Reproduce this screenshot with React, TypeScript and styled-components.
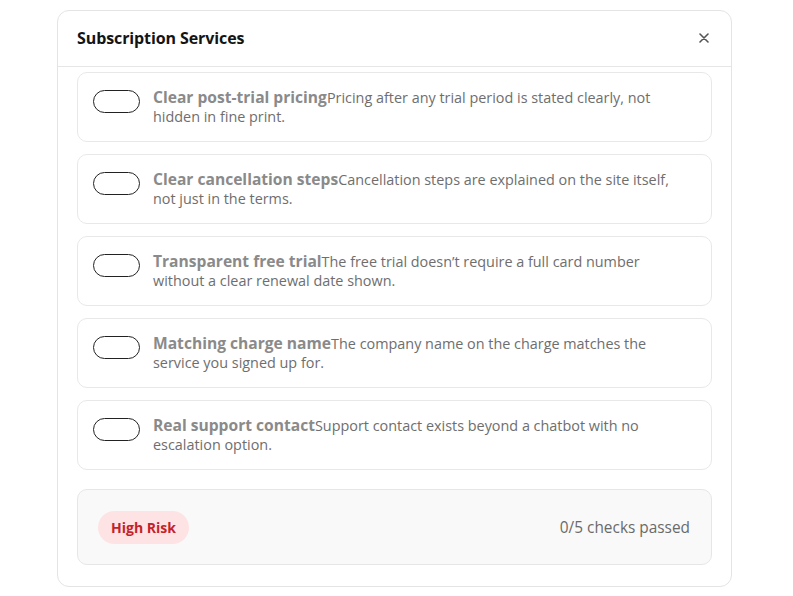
import { FC } from "react";
import styled, { createGlobalStyle } from "styled-components";

const GlobalStyle = createGlobalStyle`
  html, body {
    margin: 0;
    padding: 0;
    background: #ffffff;
    font-family: "Open Sans", "Noto Sans", sans-serif;
  }
`;

const Page = styled.div`
  width: 793px;
  height: 596px;
  overflow: hidden;
  padding: 10px 0 0 57px;
  box-sizing: border-box;
  display: flex;
`;

const Modal = styled.div`
  width: 675px;
  height: 577px;
  border: 1px solid #e4e4e4;
  border-radius: 12px;
  background: #fff;
  display: flex;
  flex-direction: column;
  box-sizing: border-box;
  overflow: hidden;
`;

const Header = styled.header`
  height: 54px;
  flex-shrink: 0;
  display: flex;
  align-items: center;
  justify-content: space-between;
  padding: 0 20px 1px 19px;
  border-bottom: 1px solid #e6e6e6;

  h2 {
    margin: 0;
    font-size: 16px;
    font-weight: 700;
    color: #141414;
    letter-spacing: -0.1px;
  }
`;

const CloseButton = styled.button`
  border: 0;
  background: none;
  padding: 0;
  width: 14px;
  height: 14px;
  display: flex;
  align-items: center;
  justify-content: center;
  color: #555;
  cursor: pointer;
`;

const Body = styled.div`
  flex: 1;
  padding: 5px 19px 22px 19px;
  display: flex;
  flex-direction: column;
  gap: 12px;
`;

const CheckCard = styled.div`
  height: 70px;
  box-sizing: border-box;
  border: 1px solid #e8e8e8;
  border-radius: 10px;
  display: flex;
  align-items: flex-start;
  gap: 13px;
  padding: 15px 18px 0 15px;
`;

const Toggle = styled.span`
  flex-shrink: 0;
  width: 47px;
  height: 23px;
  box-sizing: border-box;
  border: 1px solid #222;
  border-radius: 12px;
  margin-top: 2px;
`;

const CheckText = styled.p`
  margin: 0;
  font-size: 14.4px;
  line-height: 19px;
  color: #6e6e6e;

  strong {
    font-size: 15.6px;
    font-weight: 700;
    color: #8a8a8a;
  }
`;

const Summary = styled.div`
  margin-top: 7px;
  height: 76px;
  box-sizing: border-box;
  border: 1px solid #e6e6e6;
  border-radius: 10px;
  background: #f9f9f9;
  display: flex;
  align-items: center;
  justify-content: space-between;
  padding: 0 21px 0 20px;
`;

const RiskBadge = styled.span`
  background: #fde3e3;
  color: #c4222a;
  font-weight: 700;
  font-size: 14px;
  height: 33px;
  padding: 0 13px;
  border-radius: 17px;
  display: flex;
  align-items: center;
`;

const PassedCount = styled.span`
  font-size: 15.4px;
  color: #6a6a6a;
`;

const checks = [
  { title: "Clear post-trial pricing", text: "Pricing after any trial period is stated clearly, not hidden in fine print." },
  { title: "Clear cancellation steps", text: "Cancellation steps are explained on the site itself, not just in the terms." },
  { title: "Transparent free trial", text: "The free trial doesn\u2019t require a full card number without a clear renewal date shown." },
  { title: "Matching charge name", text: "The company name on the charge matches the service you signed up for." },
  { title: "Real support contact", text: "Support contact exists beyond a chatbot with no escalation option." },
];

const App: FC = () => {
  return (
    <>
      <GlobalStyle />
      <Page>
        <Modal>
          <Header>
            <h2>Subscription Services</h2>
            <CloseButton aria-label="Close">
              <svg width="10" height="10" viewBox="0 0 10 10">
                <path d="M1 1L9 9M9 1L1 9" stroke="currentColor" strokeWidth="1.6" strokeLinecap="round" />
              </svg>
            </CloseButton>
          </Header>
          <Body>
            {checks.map((c) => (
              <CheckCard key={c.title}>
                <Toggle />
                <CheckText>
                  <strong>{c.title}</strong>
                  {c.text}
                </CheckText>
              </CheckCard>
            ))}
            <Summary>
              <RiskBadge>High Risk</RiskBadge>
              <PassedCount>0/5 checks passed</PassedCount>
            </Summary>
          </Body>
        </Modal>
      </Page>
    </>
  );
};

export default App;
